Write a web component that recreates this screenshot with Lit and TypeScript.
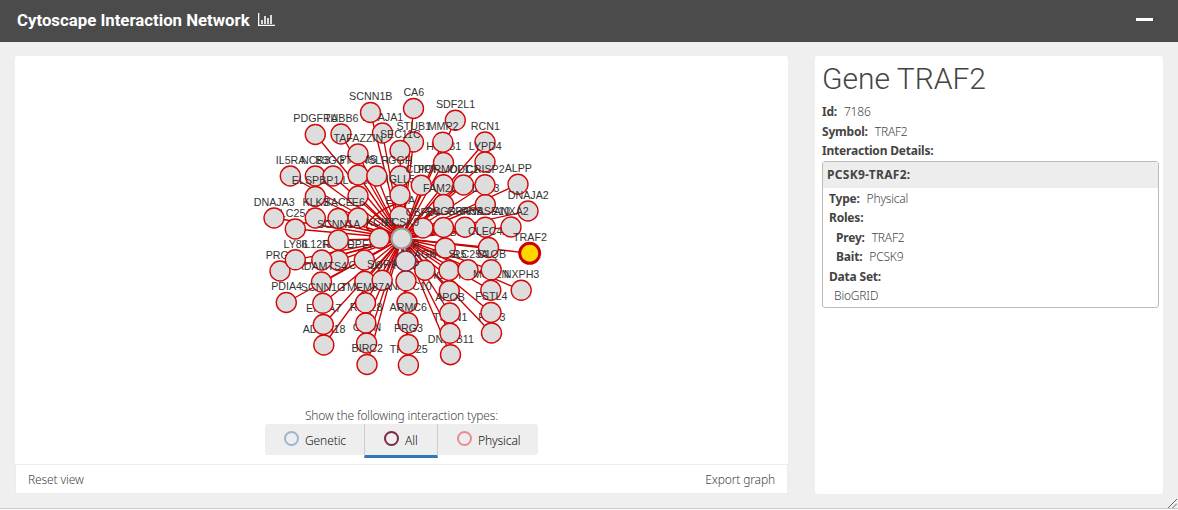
import { LitElement, html, svg, css } from "lit";
import { customElement, state } from "lit/decorators.js";

type GeneNode = [string, number, number];

const HUB = { x: 401.5, y: 238.5 };

// Painted in order: later nodes cover the labels of earlier ones.
const NODES: GeneNode[] = [
  ["EDNA", 400, 216], ["DNAJA1", 382.5, 133], ["SCNN1B", 370.5, 112.5], ["PDGFRA", 315.3, 134.5],
  ["TUBB6", 341, 134], ["SLC25A6", 358, 196], ["PTRMS", 358, 175], ["TAFAZZIN", 358, 154],
  ["CA6", 413.5, 108.5], ["SDF2L1", 455.3, 120.3], ["STUB1", 413.5, 142], ["HSPB1", 443.5, 162.5],
  ["MMP2", 442.8, 142.2], ["RCN1", 485, 142], ["LYPD4", 485, 162], ["SEC11C", 400, 150.5],
  ["IL5RA", 290.3, 176], ["NCR3", 315.3, 176], ["B3GGT", 333, 176], ["ISLR", 376.8, 176],
  ["GGH", 400, 176], ["IGLL5", 400, 195], ["CDIPT", 421.3, 185.3], ["PORMDL1", 443.5, 184.8],
  ["FAM20C", 443.5, 204.5], ["ODC1", 463.5, 185], ["DKK3", 485.3, 204.5], ["CRISP2", 485, 184.8],
  ["ALPP", 518, 184.3], ["DNAJA2", 528, 211], ["ELSPBP1", 315.3, 196.5], ["SLC25A5", 295.3, 229],
  ["DNAJA3", 274, 218], ["KLK3", 315.3, 218], ["BACE", 338, 218.5], ["E6", 358, 218],
  ["CTSL6", 364.8, 281.3], ["DPEP1", 364.3, 260], ["RILPE", 338.3, 260.5], ["IL12RB1", 321.8, 260],
  ["SCNN1A", 338.3, 240], ["AGK", 424.8, 270.2], ["IGSFN", 449.3, 290.8], ["TNFR5", 449, 270.5],
  ["TGFB5", 445.2, 248], ["CBFD4", 423, 228], ["PCGR3", 443.5, 227.5], ["GRN3B", 465, 227.2],
  ["RNASE10", 485.3, 227.2], ["CLEC4A", 488.5, 247.5], ["ANXA2", 511, 227], ["KCNJ", 379.5, 238.3],
  ["PRG2", 280, 271], ["ADAMTS4", 321.5, 282], ["LY86", 295.3, 259.8], ["TRAF2", 529.7, 253.3],
  ["SLC25A", 468, 269.8], ["MSTLN", 490.8, 290.3], ["C1QB", 491.2, 269.8], ["ANAPC10", 407, 302.5],
  ["PLTP", 406, 280.8], ["SLIRP", 382.2, 280.2], ["LDLR", 405.7, 261], ["PCSK9", HUB.x, HUB.y],
  ["NXPH3", 521.2, 290.3], ["PDIA4", 286.3, 302.5], ["ADAM18", 323.8, 345], ["EPHA7", 323.3, 324.5],
  ["SCNN1G", 322.8, 303.3], ["CLPN", 366.6, 343], ["RPL28", 365.8, 323], ["TMEM87A", 365.5, 302.8],
  ["ARMC6", 408, 322.8], ["BIRC2", 367, 364.5], ["TRIM25", 408.4, 365], ["PRG3", 408.2, 344.5],
  ["DNAJB11", 450.5, 354.7], ["TSPN1", 450, 333.3], ["APOB", 449.8, 313], ["FGF3", 491.5, 333],
  ["FSTL4", 491, 312.5],
];

@customElement("interaction-graph")
export class InteractionGraph extends LitElement {
  static styles = css`
    :host { display: block; height: 340px; }
    svg { display: block; width: 773px; height: 340px; }
    .edge { stroke: #c00; stroke-width: 1.35; fill: none; }
    .node { fill: #ddd; stroke: #d40808; stroke-width: 1.4; }
    .hub { stroke: #999; stroke-width: 2; }
    .both { stroke: #7a2748; }
    .selected { fill: #ffd700; stroke: #c00; stroke-width: 3; }
    text { font: 10.7px "Liberation Sans", Arial, sans-serif; fill: #333; text-anchor: middle; }
  `;

  private nodeClass(name: string) {
    if (name === "PCSK9") return "node hub";
    if (name === "LDLR") return "node both";
    return name === "TRAF2" ? "node selected" : "node";
  }

  render() {
    return html`<svg viewBox="15 56 773 340">
      ${NODES.map(([, x, y]) => svg`<line class="edge" x1=${HUB.x} y1=${HUB.y} x2=${x} y2=${y}></line>`)}
      <path class="edge" d="M393 233 C372 232 363 232 368 223 C374 214 390 204 400 204 L402 229"></path>
      ${NODES.map(([name, x, y]) => svg`
        <circle class=${this.nodeClass(name)} cx=${x} cy=${y} r="10"></circle>
        <text x=${x + 0.3} y=${y - 12.2}>${name}</text>`)}
    </svg>`;
  }
}

@customElement("app-root")
export class AppRoot extends LitElement {
  @state() private filter = "All";

  static styles = css`
    :host {
      display: flex; flex-direction: column; box-sizing: border-box; height: 510px;
      background: #efefef; color: #444; font: 300 12px/19px "Noto Sans", sans-serif;
      border-bottom: 1px solid #fbfbfb; overflow: hidden;
    }
    header {
      height: 42px; flex: none; box-sizing: border-box; padding: 0 25px 3px 17px;
      display: flex; align-items: center; background: #4b4b4b; color: #fff;
    }
    h3 { margin: 0; font: 700 16.8px/20px Roboto, sans-serif; }
    .chart { margin-left: 8px; width: 17px; height: 13px; }
    .minimize { margin-left: auto; width: 17px; height: 3px; background: #fff; }
    main {
      flex: 1; display: flex; gap: 27px; padding: 14px 15px 14px; box-sizing: border-box;
      position: relative; border-bottom: 1px solid #c8c8c8; min-height: 0;
    }
    .left { width: 773px; display: flex; flex-direction: column; }
    .canvas { background: #fff; height: 408px; border-radius: 3px 3px 0 0; }
    .controls { display: flex; flex-direction: column; align-items: center; padding-top: 11px; }
    .caption { line-height: 17px; letter-spacing: -0.17px; }
    .buttons { display: flex; height: 34px; align-items: flex-start; }
    button {
      all: unset; box-sizing: border-box; display: flex; align-items: center; height: 31px;
      background: #eee; color: #111; cursor: pointer; padding-top: 2px; letter-spacing: -0.1px;
    }
    .genetic { width: 99px; padding-left: 19px; border-radius: 3px 0 0 3px; }
    .all { width: 74px; padding-left: 19px; border: solid #ccc; border-width: 0 1px; }
    .physical { width: 100px; padding-left: 19px; border-radius: 0 3px 3px 0; }
    .active { height: 34px; border-bottom: 3px solid #2f79b9; }
    .ring { width: 15px; height: 15px; box-sizing: border-box; border: 2px solid; border-radius: 50%; margin: -5px 6px 0 0; }
    .genetic .ring { border-color: #9bb5d1; }
    .all .ring { border-color: #7a2748; }
    .physical .ring { border-color: #e68e8e; }
    .toolbar {
      height: 30px; box-sizing: border-box; border: 1px solid #ececec; background: #fff;
      display: flex; justify-content: space-between; align-items: center; padding: 0 12px; color: #444;
      letter-spacing: -0.13px;
    }
    .details {
      width: 348px; height: 438px; box-sizing: border-box; padding: 7px 4px 0 7px;
      background: #fff; border-radius: 3px; letter-spacing: -0.2px;
    }
    h1 { margin: 0 0 7px; font: 300 30px/32px Roboto, sans-serif; letter-spacing: 0; }
    .details b { font-weight: 700; margin-right: 4px; }
    .row { height: 19.5px; }
    .box { border: 1px solid #bbb; border-radius: 3px; height: 147px; box-sizing: border-box; }
    .boxhead { height: 26px; line-height: 26px; padding-left: 4px; background: #ededed; margin-bottom: 1px; letter-spacing: 0.3px; }
    .boxbody { padding-left: 6px; }
    .indent { padding-left: 7px; }
    .source { padding-left: 5px; }
    .grip { position: absolute; right: 1px; bottom: 0; width: 9px; height: 9px; }
  `;

  private button(name: string) {
    return html`<button class="${name.toLowerCase()} ${this.filter === name ? "active" : ""}"
      @click=${() => (this.filter = name)}><span class="ring"></span><span>${name}</span></button>`;
  }

  render() {
    return html`
      <header>
        <h3>Cytoscape Interaction Network</h3>
        <svg class="chart" viewBox="0 0 17 13"><path d="M.5 0V12.5H17M4 7v4M7 3v8M10 5v6M13 2v9" fill="none" stroke="#fff" stroke-width="1.6"></path></svg>
        <span class="minimize"></span>
      </header>
      <main>
        <section class="left">
          <div class="canvas">
            <interaction-graph></interaction-graph>
            <div class="controls">
              <span class="caption">Show the following interaction types:</span>
              <div class="buttons">${["Genetic", "All", "Physical"].map((n) => this.button(n))}</div>
            </div>
          </div>
          <div class="toolbar"><span>Reset view</span><span>Export graph</span></div>
        </section>
        <aside class="details">
          <h1>Gene TRAF2</h1>
          <div class="row"><b>Id:</b> 7186</div>
          <div class="row"><b>Symbol:</b> TRAF2</div>
          <div class="row"><b>Interaction Details:</b></div>
          <div class="box">
            <div class="boxhead"><b>PCSK9-TRAF2:</b></div>
            <div class="boxbody">
              <div class="row"><b>Type:</b> Physical</div>
              <div class="row"><b>Roles:</b></div>
              <div class="row indent"><b>Prey:</b> TRAF2</div>
              <div class="row indent"><b>Bait:</b> PCSK9</div>
              <div class="row"><b>Data Set:</b></div>
              <div class="row source">BioGRID</div>
            </div>
          </div>
        </aside>
        <svg class="grip" viewBox="0 0 9 9"><path d="M0 9L9 0M4.5 9L9 4.5" stroke="#666" fill="none"></path></svg>
      </main>`;
  }
}
